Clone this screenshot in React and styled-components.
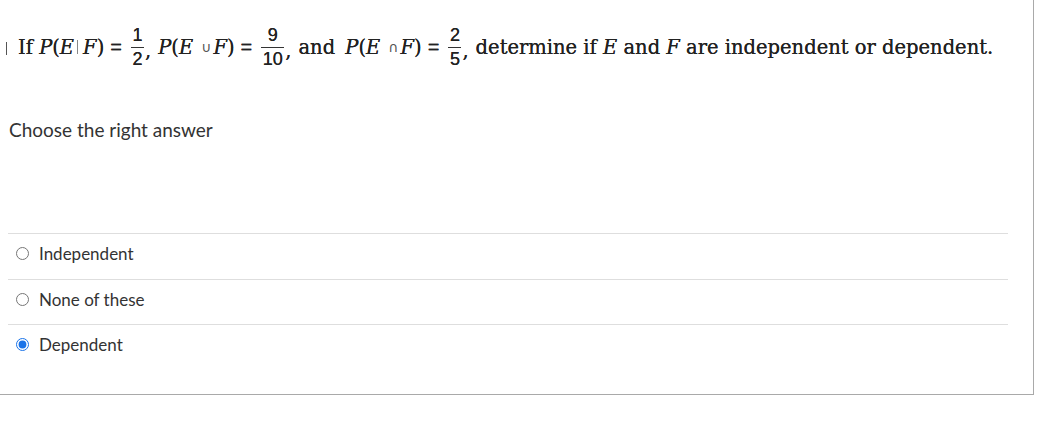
import React from "react";
import styled, { createGlobalStyle } from "styled-components";

const Global = createGlobalStyle`
  html, body { margin: 0; padding: 0; background: #fff; }
  body { font-family: Lato, "Liberation Sans", sans-serif; }
`;

const Panel = styled.div`
  box-sizing: border-box;
  width: 1034px;
  height: 395px;
  border-right: 1px solid #a9a9a9;
  border-bottom: 1px solid #a9a9a9;
  display: flex;
  flex-direction: column;
`;

const QuestionLine = styled.div`
  display: flex;
  align-items: center;
  height: 50px;
  margin-top: 22px;
  padding-left: 6px;
  font-family: "DejaVu Serif", "Liberation Serif", serif;
  font-size: 19.5px;
  color: #222;
  white-space: pre;
  text-shadow: 0 0 0.4px #222;
`;

const CutMark = styled.span`
  display: inline-block;
  width: 1px;
  height: 13px;
  background: #555;
  margin-right: 11px;
  margin-top: 2px;
`;

const Word = styled.span`
  margin-right: ${(p) => p.$after || "0px"};
`;

const Var = styled.span`
  font-style: italic;
`;

const Op = styled.span`
  font-family: "Liberation Sans", Arial, sans-serif;
  font-size: 20px;
  margin: 0 6px;
`;

const SetOp = styled.span`
  font-family: "DejaVu Sans", sans-serif;
  font-size: 14px;
  margin: 0 2px 0 8px;
  color: #555;
  text-shadow: none;
`;

const Bar = styled.span`
  display: inline-block;
  width: 1px;
  height: 14px;
  background: #888;
  margin: 0 5px 0 3px;
`;

const Frac = styled.span`
  display: inline-flex;
  flex-direction: column;
  align-items: center;
  font-family: "Liberation Sans", Arial, sans-serif;
  font-size: 18px;
  line-height: 19px;
  margin: 0 1px 0 3px;
`;

const Num = styled.span`
  padding: 0 1.5px 2px;
`;

const Den = styled.span`
  padding: 2px 1.5px 0;
  border-top: 1.5px solid #333;
  align-self: stretch;
  text-align: center;
`;

const Comma = styled.span`
  margin-top: 6px;
  margin-right: 7px;
`;

const Prompt = styled.div`
  margin-top: 48px;
  padding-left: 9px;
  font-size: 19px;
  color: #333;
  line-height: 20px;
`;

const Answers = styled.div`
  margin: 93px 25px 0 8px;
`;

const Answer = styled.label`
  display: flex;
  align-items: center;
  height: 45.5px;
  padding-bottom: 5px;
  border-top: 1px solid #dedede;
  font-size: 17px;
  color: #333;
  box-sizing: border-box;
`;

const Radio = styled.input`
  margin: 0 10px 0 8px;
  width: 13px;
  height: 13px;
  accent-color: #1a73e8;
`;

const options = [
  { label: "Independent", checked: false },
  { label: "None of these", checked: false },
  { label: "Dependent", checked: true },
];

function Fraction({ n, d }) {
  return (
    <Frac>
      <Num>{n}</Num>
      <Den>{d}</Den>
    </Frac>
  );
}

export default function App() {
  return (
    <>
      <Global />
      <Panel>
        <QuestionLine>
          <CutMark />
          <Word>If </Word>
          <Var>P</Var>(<Var>E</Var>
          <Bar />
          <Var>F</Var>)<Op>=</Op>
          <Fraction n="1" d="2" />
          <Comma>,</Comma>
          <Var>P</Var>(<Var>E</Var>
          <SetOp>∪</SetOp>
          <Var>F</Var>)<Op>=</Op>
          <Fraction n="9" d="10" />
          <Comma>,</Comma>
          <Word $after="4px">and </Word>
          <Var>P</Var>(<Var>E</Var>
          <SetOp>∩</SetOp>
          <Var>F</Var>)<Op>=</Op>
          <Fraction n="2" d="5" />
          <Comma>,</Comma>
          <Word>determine if </Word>
          <Var>E</Var>
          <Word> and </Word>
          <Var>F</Var>
          <Word> are independent or dependent.</Word>
        </QuestionLine>
        <Prompt>Choose the right answer</Prompt>
        <Answers>
          {options.map((o) => (
            <Answer key={o.label}>
              <Radio type="radio" name="ans" defaultChecked={o.checked} />
              {o.label}
            </Answer>
          ))}
        </Answers>
      </Panel>
    </>
  );
}
